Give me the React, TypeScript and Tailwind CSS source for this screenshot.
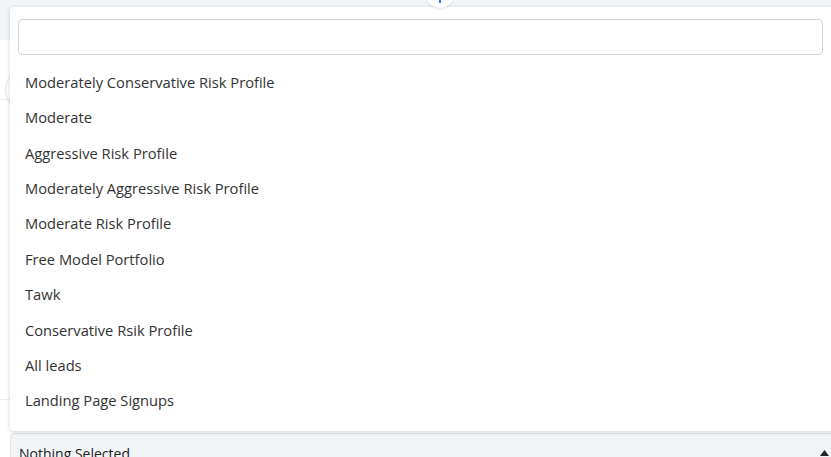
import React from "react";

const lists = [
  "Moderately Conservative Risk Profile",
  "Moderate",
  "Aggressive Risk Profile",
  "Moderately Aggressive Risk Profile",
  "Moderate Risk Profile",
  "Free Model Portfolio",
  "Tawk",
  "Conservative Rsik Profile",
  "All leads",
  "Landing Page Signups",
];

const ListPicker = () => {
  return (
    <div className="relative ml-[10px]">
      {/* dropup menu */}
      <div className="absolute bottom-full left-0 mb-[2px] w-[830px] rounded-[4px] bg-white pt-[12px] pb-[13px] pl-[8px] pr-[8px] shadow-[0_1px_4px_rgba(0,0,0,0.18)]">
        <input
          type="text"
          className="block h-[36px] w-[805px] rounded-[4px] border border-[#cfd4da] bg-white px-2 text-[14px] outline-none"
        />
        <ul className="mt-[9px]">
          {lists.map((name) => (
            <li
              key={name}
              className="flex h-[35.4px] items-center pl-[7px] text-[14.7px] text-[#333]"
            >
              {name}
            </li>
          ))}
        </ul>
      </div>
      <button className="flex h-[40px] w-[830px] items-start justify-between rounded-t-[4px] border border-[#dde3e8] bg-[#f1f5f8] pl-[8px] pr-[10px] pt-[9px] text-left text-[14px] text-[#222]">
        <span>Nothing Selected</span>
        <svg width="9" height="6" viewBox="0 0 9 6" className="mt-[7px]">
          <path d="M4.5 0L9 6H0z" fill="#222" />
        </svg>
      </button>
    </div>
  );
};

const App = () => {
  return (
    <div
      className="relative h-[457px] w-[831px] overflow-hidden bg-white"
      style={{ fontFamily: "'Open Sans', 'Noto Sans', sans-serif" }}
    >
      <div className="h-[40px] bg-[#f2f5f8]" />
      {/* page content behind the menu */}
      <div className="flex h-[393px] flex-col">
        <div className="flex h-[60px] items-start border-b border-[#e8eef5] pl-[5px] pt-[28px]">
          <div className="h-[44px] w-[44px] shrink-0 rounded-full border border-[#d9e3f1]" />
        </div>
        <div className="h-[300px] border-b border-[#e8eef5]" />
      </div>
      <ListPicker />
      {/* step marker peeking over the header */}
      <div className="absolute left-[425px] top-[-22px] flex h-[30px] w-[30px] items-end justify-center rounded-full bg-white shadow-[0_1px_3px_rgba(0,0,0,0.12)]">
        <span className="mb-[5px] h-[4px] w-[2px] bg-[#2f80ed]" />
      </div>
    </div>
  );
};

export default App;
